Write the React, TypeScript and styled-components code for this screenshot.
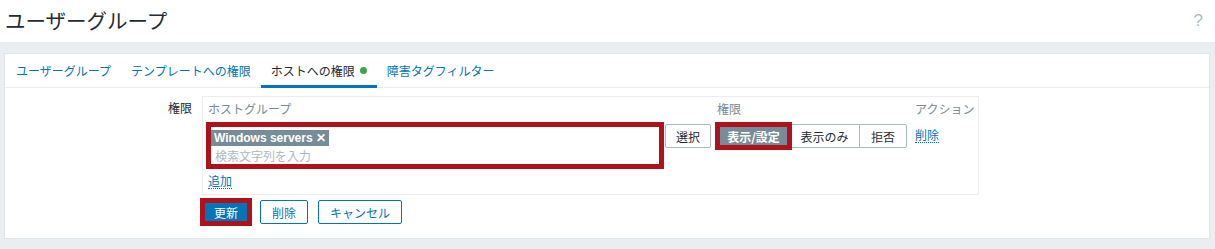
import React, { FC } from 'react';
import styled, { createGlobalStyle, css } from 'styled-components';

const GlobalStyle = createGlobalStyle`
  html, body {
    margin: 0;
    padding: 0;
    background: #ebeef0;
  }
  body {
    font-family: "Liberation Sans", Arial, "Noto Sans CJK JP", sans-serif;
    font-size: 12px;
    color: #1f2c33;
  }
`;

const RED = '#b0121c';

// annotation frame drawn over a control, does not change layout
const highlight = css`
  border-color: ${RED} !important;
  box-shadow: inset 0 0 0 2px ${RED}, 0 0 0 2px ${RED};
`;

const Header = styled.header`
  height: 42px;
  background: #fff;
  display: flex;
  align-items: center;
  justify-content: space-between;
  padding: 0 12px 0 5px;
`;

const Title = styled.h1`
  margin: 0;
  font-size: 20.5px;
  font-weight: normal;
  color: #1f2c33;
  font-family: "Noto Sans CJK JP", sans-serif;
  line-height: 24px;
  margin-top: -2px;
`;

const Help = styled.span`
  font-size: 17px;
  color: #acbbc2;
`;

const Main = styled.main`
  padding: 11px 5px 9px 4px;
`;

const Panel = styled.section`
  background: #fff;
  border: 1px solid #dfe4e7;
`;

const TabBar = styled.nav`
  display: flex;
  height: 33px;
  border-bottom: 1px solid #ebeef0;
  padding-left: 1px;
`;

const Tab = styled.a<{ $active?: boolean }>`
  display: flex;
  align-items: center;
  gap: 5px;
  height: 30px;
  padding: 0 10px;
  border-bottom: 3px solid ${p => (p.$active ? '#0275b8' : 'transparent')};
  color: ${p => (p.$active ? '#1f2c33' : '#0275b8')};
  font-family: "Noto Sans CJK JP", sans-serif;
  font-size: 12px;
  margin-top: 1px;
`;

const Dot = styled.span`
  width: 7px;
  height: 7px;
  border-radius: 50%;
  background: #3fa34d;
`;

const Form = styled.div`
  display: grid;
  grid-template-columns: 187px 1fr;
  column-gap: 10px;
  row-gap: 5px;
  padding: 8px 0 14px 0;
`;

const Label = styled.div`
  text-align: right;
  font-family: "Noto Sans CJK JP", sans-serif;
  line-height: 16px;
  padding-top: 4px;
`;

const Table = styled.div`
  width: 777px;
  box-sizing: border-box;
  border: 1px solid #ebeef0;
  padding: 4px 0 5px 5px;
  display: grid;
  grid-template-columns: 509px 198px 1fr;
  row-gap: 7px;
  white-space: nowrap;
`;

const HeadCell = styled.div`
  color: #768d99;
  font-family: "Noto Sans CJK JP", sans-serif;
  line-height: 16px;
`;

const Cell = styled.div`
  display: flex;
  align-items: flex-start;
`;

const MultiSelect = styled.div`
  width: 454px;
  height: 43px;
  box-sizing: border-box;
  border: 1px solid #acbbc2;
  padding: 4px 3px 0 3px;
  ${highlight};
`;

const TagItem = styled.span`
  display: inline-flex;
  align-items: center;
  gap: 3px;
  height: 16px;
  padding: 0 3px;
  background: #768d99;
  color: #fff;
  font-weight: bold;
  font-size: 12px;
  margin-left: -1px;
  margin-top: 1px;
`;

const Placeholder = styled.div`
  color: #acbbc2;
  font-family: "Noto Sans CJK JP", sans-serif;
  line-height: 18px;
  padding-left: 3px;
  margin-top: 1px;
`;

const Button = styled.button<{ $variant?: 'plain' | 'primary' | 'outline'; $marked?: boolean }>`
  font-family: "Noto Sans CJK JP", sans-serif;
  font-size: 12px;
  height: 24px;
  padding: 0 11px;
  border-radius: 2px;
  cursor: pointer;
  box-sizing: border-box;
  ${p =>
    p.$variant === 'primary'
      ? css`
          background: #0275b8;
          border: 1px solid #0275b8;
          color: #fff;
        `
      : p.$variant === 'outline'
      ? css`
          background: #fff;
          border: 1px solid #0275b8;
          color: #0275b8;
        `
      : css`
          background: #fff;
          border: 1px solid #acbbc2;
          color: #1f2c33;
        `}
  ${p => p.$marked && css`
    border-radius: 0;
    ${highlight};
  `};
`;

const SelectButton = styled(Button)`
  margin-left: 3px;
  width: 46px;
  padding: 0;
`;

const Segments = styled.div`
  display: flex;
`;

const Segment = styled.span<{ $active?: boolean; $marked?: boolean; $w: number }>`
  width: ${p => p.$w}px;
  height: 24px;
  box-sizing: border-box;
  display: flex;
  align-items: center;
  justify-content: center;
  border: 1px solid #acbbc2;
  margin-left: -1px;
  font-family: "Noto Sans CJK JP", sans-serif;
  background: ${p => (p.$active ? '#768d99' : '#fff')};
  color: ${p => (p.$active ? '#fff' : '#1f2c33')};
  font-weight: ${p => (p.$active ? 'bold' : 'normal')};
  &:first-child {
    margin-left: 0;
    border-radius: 2px 0 0 2px;
  }
  &:last-child {
    border-radius: 0 2px 2px 0;
  }
  ${p => p.$marked && css`
    position: relative;
    z-index: 1;
    border-radius: 0 !important;
    ${highlight};
  `}
`;

const Link = styled.a<{ $pad?: number }>`
  color: #0275b8;
  font-family: "Noto Sans CJK JP", sans-serif;
  border-bottom: 1px dotted #0275b8;
  line-height: 14px;
  align-self: flex-start;
  margin-top: ${p => p.$pad ?? 0}px;
`;

const AddRow = styled.div`
  grid-column: 1 / -1;
  display: flex;
`;

const Actions = styled.div`
  grid-column: 2;
  display: flex;
  gap: 10px;
`;

const App: FC = () => {
  return (
    <>
      <GlobalStyle />
      <Header>
        <Title>ユーザーグループ</Title>
        <Help>?</Help>
      </Header>
      <Main>
        <Panel>
          <TabBar>
            <Tab>ユーザーグループ</Tab>
            <Tab>テンプレートへの権限</Tab>
            <Tab $active>
              ホストへの権限
              <Dot />
            </Tab>
            <Tab>障害タグフィルター</Tab>
          </TabBar>
          <Form>
            <Label>権限</Label>
            <Table>
              <HeadCell>ホストグループ</HeadCell>
              <HeadCell>権限</HeadCell>
              <HeadCell>アクション</HeadCell>
              <Cell>
                <MultiSelect>
                  <TagItem>
                    Windows servers <span>✕</span>
                  </TagItem>
                  <Placeholder>検索文字列を入力</Placeholder>
                </MultiSelect>
                <SelectButton>選択</SelectButton>
              </Cell>
              <Cell>
                <Segments>
                  <Segment $w={73} $active $marked>表示/設定</Segment>
                  <Segment $w={71}>表示のみ</Segment>
                  <Segment $w={48}>拒否</Segment>
                </Segments>
              </Cell>
              <Cell>
                <Link $pad={4}>削除</Link>
              </Cell>
              <AddRow>
                <Link>追加</Link>
              </AddRow>
            </Table>
            <Actions>
              <Button $variant="primary" $marked>更新</Button>
              <Button $variant="outline">削除</Button>
              <Button $variant="outline">キャンセル</Button>
            </Actions>
          </Form>
        </Panel>
      </Main>
    </>
  );
};

export default App;
